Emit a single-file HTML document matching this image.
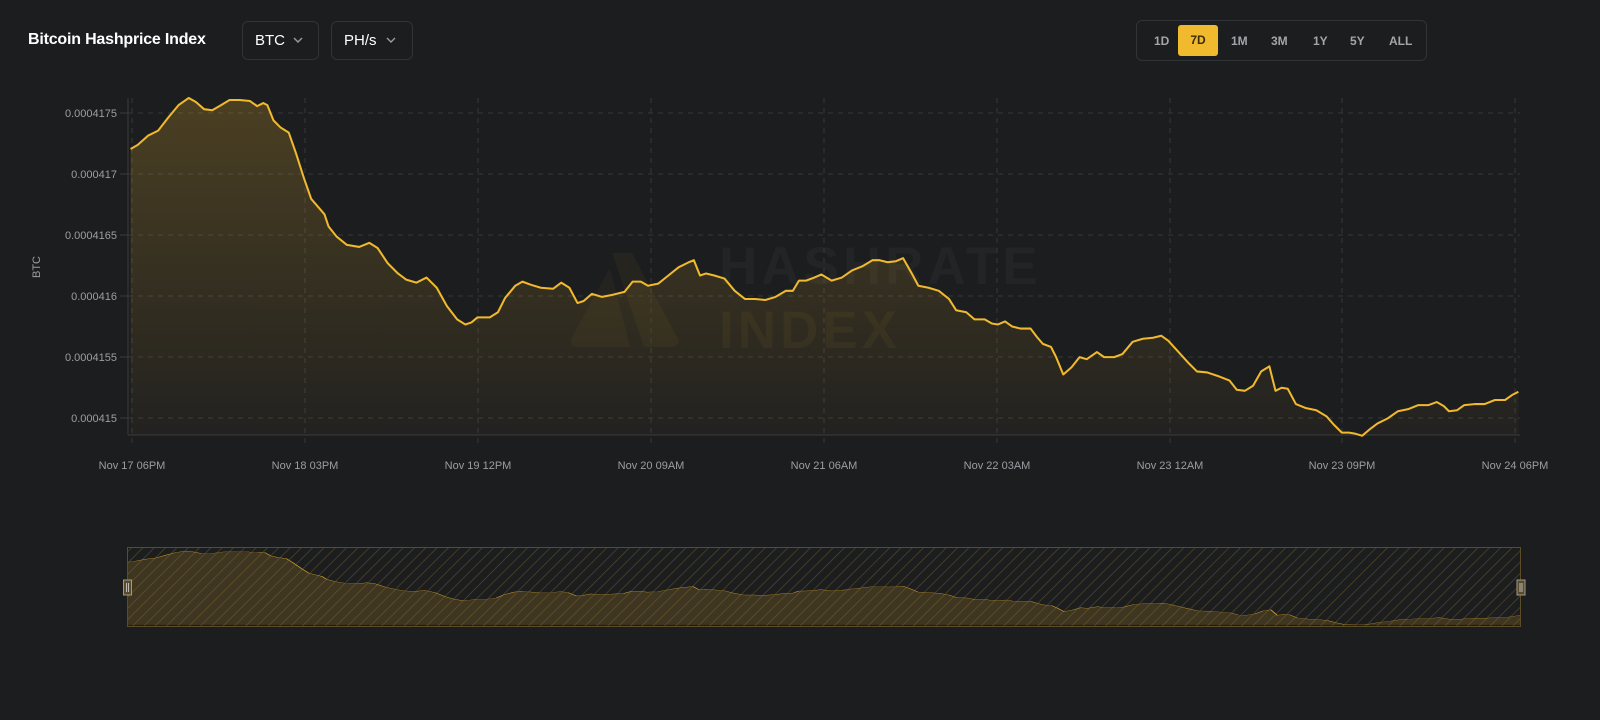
<!DOCTYPE html>
<html><head><meta charset="utf-8"><style>
html,body{margin:0;padding:0;background:#1c1d1f;width:1600px;height:720px;overflow:hidden;font-family:"Liberation Sans",Arial,sans-serif;}
.title{position:absolute;left:28px;top:31px;color:#fff;font-weight:bold;font-size:16px;letter-spacing:-0.2px}
.dd{position:absolute;top:21px;height:39px;border:1px solid #323336;border-radius:6px;box-sizing:border-box;color:#fff;font-size:15px;line-height:37px;padding-left:12px}
.dd svg{position:absolute;top:15px}
.rng{position:absolute;left:1136px;top:20px;width:291px;height:41px;border:1px solid #323336;border-radius:6px;box-sizing:border-box}
.rng span{position:absolute;top:13px;color:#a3a5aa;font-size:12px;font-weight:bold}
.rng .act{background:#f0b92e;color:#3a2c05;border-radius:3px;top:4px;height:31px;line-height:31px;width:40px;text-align:center}
</style></head><body>
<div class="title">Bitcoin Hashprice Index</div>
<div class="dd" style="left:242px;width:77px">BTC<svg style="left:50px" width="10" height="6" viewBox="0 0 10 6"><path d="M1 1l4 4 4-4" stroke="#9a9ca0" stroke-width="1.4" fill="none"/></svg></div>
<div class="dd" style="left:331px;width:82px">PH/s<svg style="left:54px" width="10" height="6" viewBox="0 0 10 6"><path d="M1 1l4 4 4-4" stroke="#9a9ca0" stroke-width="1.4" fill="none"/></svg></div>
<div class="rng">
<span style="left:17px">1D</span>
<span class="act" style="left:41px">7D</span>
<span style="left:94px">1M</span>
<span style="left:134px">3M</span>
<span style="left:176px">1Y</span>
<span style="left:213px">5Y</span>
<span style="left:252px">ALL</span>
</div>
<svg width="1600" height="720" style="position:absolute;left:0;top:0" font-family="Liberation Sans, Arial, sans-serif">
<defs>
<linearGradient id="g" x1="0" y1="0" x2="0" y2="1"><stop offset="0" stop-color="#f0b92e" stop-opacity="0.22"/><stop offset="1" stop-color="#f0b92e" stop-opacity="0.03"/></linearGradient>
<pattern id="h" width="8" height="8" patternUnits="userSpaceOnUse" patternTransform="rotate(45)"><line x1="0" y1="0" x2="0" y2="8" stroke="#8a7230" stroke-width="1.4" opacity="0.5"/></pattern>
<path id="ln" d="M128,146 L135,142 L145,133 L155,128 L165,115 L175,103 L185,96 L192,100 L200,107 L208,108 L215,104 L225,98 L235,98 L245,99 L252,104 L258,101 L262,103 L268,118 L275,125 L283,130 L290,150 L298,175 L305,195 L312,203 L318,210 L322,222 L330,232 L340,240 L352,242 L362,238 L370,243 L380,258 L390,268 L398,274 L408,277 L418,272 L428,282 L438,300 L448,313 L456,318 L462,316 L468,311 L480,311 L488,306 L495,292 L505,280 L512,276 L520,279 L530,282 L542,283 L550,277 L558,282 L566,297 L572,295 L580,288 L590,291 L600,289 L612,286 L620,276 L628,276 L635,280 L645,278 L655,270 L665,262 L675,257 L680,255 L686,270 L692,268 L700,270 L710,273 L720,285 L730,293 L740,293 L750,294 L760,291 L770,285 L777,285 L783,275 L790,275 L798,272 L805,269 L815,275 L825,272 L835,265 L845,261 L855,255 L862,255 L870,257 L878,256 L885,253 L893,267 L900,280 L910,282 L920,285 L930,293 L937,304 L947,306 L955,313 L965,313 L972,317 L978,318 L985,315 L992,320 L1000,322 L1010,322 L1016,330 L1022,337 L1030,340 L1035,350 L1042,367 L1050,360 L1058,350 L1065,352 L1075,345 L1082,350 L1092,350 L1100,347 L1110,335 L1120,332 L1130,331 L1138,329 L1145,334 L1155,345 L1165,356 L1173,364 L1183,365 L1195,369 L1205,373 L1212,382 L1220,383 L1228,378 L1236,364 L1244,359 L1250,383 L1256,380 L1262,381 L1270,396 L1280,400 L1290,402 L1300,408 L1307,416 L1315,424 L1322,424 L1328,425 L1335,427 L1342,421 L1350,415 L1360,410 L1370,403 L1380,401 L1390,397 L1400,397 L1408,394 L1415,398 L1420,403 L1428,402 L1435,397 L1445,396 L1455,396 L1465,392 L1475,392 L1482,387 L1488,384"/>
<path id="ar" d="M128,146 L135,142 L145,133 L155,128 L165,115 L175,103 L185,96 L192,100 L200,107 L208,108 L215,104 L225,98 L235,98 L245,99 L252,104 L258,101 L262,103 L268,118 L275,125 L283,130 L290,150 L298,175 L305,195 L312,203 L318,210 L322,222 L330,232 L340,240 L352,242 L362,238 L370,243 L380,258 L390,268 L398,274 L408,277 L418,272 L428,282 L438,300 L448,313 L456,318 L462,316 L468,311 L480,311 L488,306 L495,292 L505,280 L512,276 L520,279 L530,282 L542,283 L550,277 L558,282 L566,297 L572,295 L580,288 L590,291 L600,289 L612,286 L620,276 L628,276 L635,280 L645,278 L655,270 L665,262 L675,257 L680,255 L686,270 L692,268 L700,270 L710,273 L720,285 L730,293 L740,293 L750,294 L760,291 L770,285 L777,285 L783,275 L790,275 L798,272 L805,269 L815,275 L825,272 L835,265 L845,261 L855,255 L862,255 L870,257 L878,256 L885,253 L893,267 L900,280 L910,282 L920,285 L930,293 L937,304 L947,306 L955,313 L965,313 L972,317 L978,318 L985,315 L992,320 L1000,322 L1010,322 L1016,330 L1022,337 L1030,340 L1035,350 L1042,367 L1050,360 L1058,350 L1065,352 L1075,345 L1082,350 L1092,350 L1100,347 L1110,335 L1120,332 L1130,331 L1138,329 L1145,334 L1155,345 L1165,356 L1173,364 L1183,365 L1195,369 L1205,373 L1212,382 L1220,383 L1228,378 L1236,364 L1244,359 L1250,383 L1256,380 L1262,381 L1270,396 L1280,400 L1290,402 L1300,408 L1307,416 L1315,424 L1322,424 L1328,425 L1335,427 L1342,421 L1350,415 L1360,410 L1370,403 L1380,401 L1390,397 L1400,397 L1408,394 L1415,398 L1420,403 L1428,402 L1435,397 L1445,396 L1455,396 L1465,392 L1475,392 L1482,387 L1488,384 L1488,426.3 L128,426.3 Z"/>
</defs>
<!-- watermark -->
<g>
<path d="M612,253 L632,253 L677,337 Q682,347 670,347 L644,347 Z" fill="#25241f"/>
<path d="M610,268 L630,347 L578,347 Q568,347 572,337 Z" fill="#24231f"/>
<text x="719" y="284" font-size="53" font-weight="bold" fill="#232426" letter-spacing="4">HASHRATE</text>
<text x="719" y="348" font-size="53" font-weight="bold" fill="#26251f" letter-spacing="4">INDEX</text>
</g>
<!-- grid -->
<g stroke="#36373a" stroke-width="1" stroke-dasharray="5,5">
<line x1="128" y1="113" x2="1520" y2="113"/><line x1="128" y1="174" x2="1520" y2="174"/><line x1="128" y1="235" x2="1520" y2="235"/><line x1="128" y1="296" x2="1520" y2="296"/><line x1="128" y1="357" x2="1520" y2="357"/><line x1="128" y1="418" x2="1520" y2="418"/>
<line x1="132" y1="98" x2="132" y2="443"/><line x1="305" y1="98" x2="305" y2="443"/><line x1="478" y1="98" x2="478" y2="443"/><line x1="651" y1="98" x2="651" y2="443"/><line x1="824" y1="98" x2="824" y2="443"/><line x1="997" y1="98" x2="997" y2="443"/><line x1="1170" y1="98" x2="1170" y2="443"/><line x1="1342" y1="98" x2="1342" y2="443"/><line x1="1515" y1="98" x2="1515" y2="443"/>
</g>
<g stroke="#3a3b3e"><line x1="128" y1="98" x2="128" y2="435"/><line x1="128" y1="435" x2="1520" y2="435"/>
<line x1="120" y1="113" x2="128" y2="113"/><line x1="120" y1="174" x2="128" y2="174"/><line x1="120" y1="235" x2="128" y2="235"/><line x1="120" y1="296" x2="128" y2="296"/><line x1="120" y1="357" x2="128" y2="357"/><line x1="120" y1="418" x2="128" y2="418"/></g>
<g transform="scale(1.0204)">
<use href="#ar" fill="url(#g)"/>
<use href="#ln" fill="none" stroke="#f0b92e" stroke-width="2" vector-effect="non-scaling-stroke" stroke-linejoin="round"/>
</g>
<g font-size="11" fill="#9c9ea3" text-anchor="end">
<text x="117" y="117">0.0004175</text><text x="117" y="178">0.000417</text><text x="117" y="239">0.0004165</text><text x="117" y="300">0.000416</text><text x="117" y="361">0.0004155</text><text x="117" y="422">0.000415</text>
</g>
<text transform="translate(40,267) rotate(-90)" font-size="11" fill="#9c9ea3" text-anchor="middle">BTC</text>
<g font-size="11" fill="#9c9ea3" text-anchor="middle">
<text x="132" y="469">Nov 17 06PM</text><text x="305" y="469">Nov 18 03PM</text><text x="478" y="469">Nov 19 12PM</text><text x="651" y="469">Nov 20 09AM</text><text x="824" y="469">Nov 21 06AM</text><text x="997" y="469">Nov 22 03AM</text><text x="1170" y="469">Nov 23 12AM</text><text x="1342" y="469">Nov 23 09PM</text><text x="1515" y="469">Nov 24 06PM</text>
</g>
<!-- navigator -->
<g transform="translate(127.5,551) scale(1.0246,0.2236) translate(-128,-96)">
<use href="#ar" fill="#f0b92e" fill-opacity="0.16"/>
<use href="#ln" fill="none" stroke="#f0b92e" stroke-width="1" vector-effect="non-scaling-stroke"/>
</g>
<rect x="127.5" y="547" width="1393" height="80" fill="url(#h)"/>
<rect x="127.5" y="547.5" width="1393" height="79" fill="none" stroke="#5a4c24"/>
<g><rect x="123.5" y="580" width="8" height="15" fill="#5a4c24" stroke="#999" stroke-width="1"/><line x1="126.5" y1="583" x2="126.5" y2="592" stroke="#bbb"/><line x1="128.5" y1="583" x2="128.5" y2="592" stroke="#bbb"/></g>
<g><rect x="1517" y="580" width="8" height="15" fill="#5a4c24" stroke="#999" stroke-width="1"/><line x1="1520" y1="583" x2="1520" y2="592" stroke="#bbb"/><line x1="1522" y1="583" x2="1522" y2="592" stroke="#bbb"/></g>
</svg>
</body></html>
